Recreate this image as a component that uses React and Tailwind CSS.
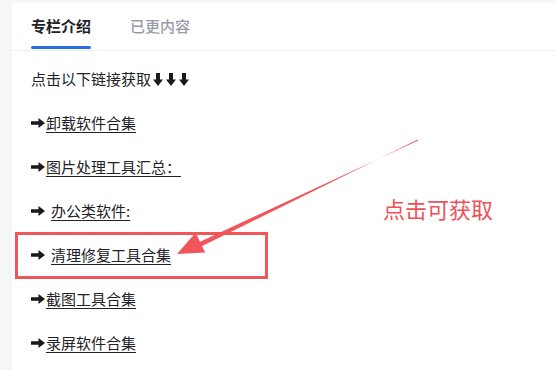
function RightArrow() {
  return (
    <svg width="14" height="10" viewBox="0 0 14 10" className="shrink-0">
      <path d="M0 3.2h7.5V0L14 5l-6.5 5V6.8H0z" fill="#1a1a1a" />
    </svg>
  );
}
function DownArrow() {
  return (
    <svg width="10" height="13" viewBox="0 0 10 13" className="shrink-0">
      <path d="M3 0h4v6.5h3L5 13 0 6.5h3z" fill="#1a1a1a" />
    </svg>
  );
}

export default function App() {
  const items = [
    { t: "卸载软件合集", sp: false },
    { t: "图片处理工具汇总：", sp: false },
    { t: "办公类软件:", sp: true },
    { t: "清理修复工具合集", sp: true },
    { t: "截图工具合集", sp: false },
    { t: "录屏软件合集", sp: false },
  ];
  return (
    <div
      className="relative w-[556px] h-[370px] overflow-hidden bg-[#f5f6f8] pl-[12px] pt-[3px]"
      style={{ fontFamily: '"Noto Sans CJK SC", "Noto Sans", sans-serif' }}
    >
      <div className="h-full bg-white">
        <div className="flex h-[48px] border-b border-[#eeeeee] pl-[19px] gap-[39px]">
          <div className="relative flex items-center text-[15px] font-bold text-[#222226] pb-[1px]">
            专栏介绍
            <div className="absolute left-0 right-0 bottom-[1px] h-[3px] rounded-full bg-[#2a6fe8]" />
          </div>
          <div className="flex items-center text-[15px] font-medium text-[#999aaa] pb-[1px]">已更内容</div>
        </div>
        <div className="flex flex-col pl-[19px] pt-[6px] text-[15px] text-[#222226]">
          <div className="flex items-center h-[44px]">
            <span>点击以下链接获取</span>
            <div className="flex gap-[3px] ml-[2px]">
              <DownArrow />
              <DownArrow />
              <DownArrow />
            </div>
          </div>
          {items.map((it) => (
            <div key={it.t} className="flex items-center h-[44px]">
              <RightArrow />
              <span
                className={
                  "underline underline-offset-[3px] decoration-[1px] " +
                  (it.sp ? "ml-[6px]" : "ml-[1px]")
                }
              >
                {it.t}
              </span>
            </div>
          ))}
        </div>
      </div>

      <div className="absolute left-[15px] top-[232px] w-[253px] h-[47px] border-[3px] border-[#f0555a]" />
      <div className="absolute left-[383px] top-[193px] text-[22px] leading-[30px] text-[#f0505a]">点击可获取</div>

      <svg className="absolute left-0 top-0" width="556" height="370" viewBox="0 0 556 370">
        <polygon points="418.2,140.4 417.8,139.6 199.1,247.6 196.9,243.2" fill="#f0555a" />
        <polygon points="177,254 205.2,252.6 195.6,232.8" fill="#f0555a" />
      </svg>
    </div>
  );
}
